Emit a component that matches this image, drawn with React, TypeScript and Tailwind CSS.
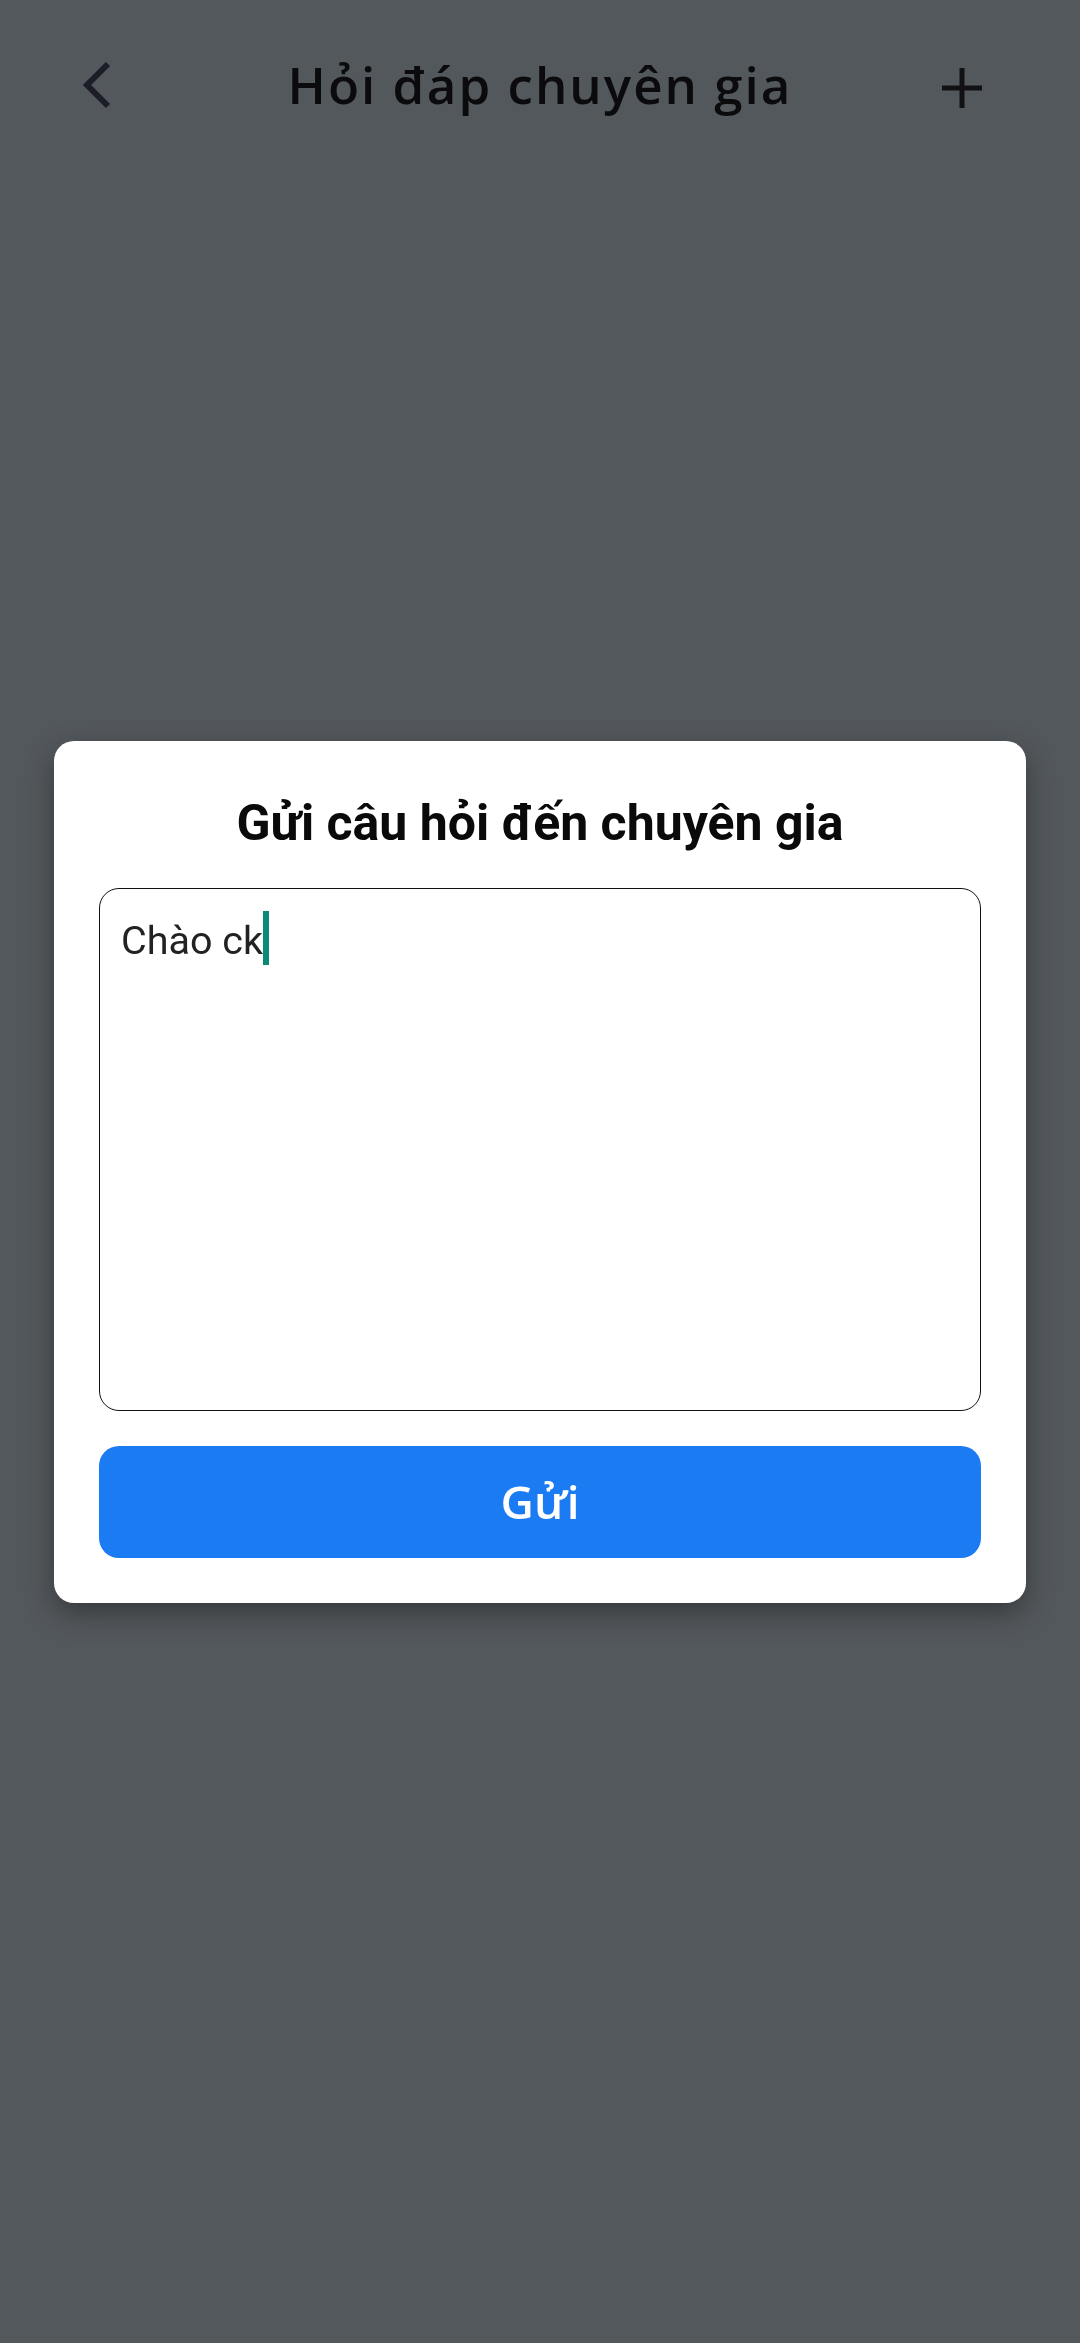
import React from "react";

export default function App() {
  return (
    <div className="relative min-h-[2343px] w-[1080px] bg-[#53585c]" style={{ fontFamily: "Roboto, 'Noto Sans', sans-serif" }}>
      {/* Header */}
      <div className="relative flex h-[170px] items-start justify-between pl-[74px] pr-[96px] pt-[58px]">
        <svg width="40" height="54" viewBox="0 0 40 54">
          <path d="M34 6 L13 27 L34 48" fill="none" stroke="#1d1d28" strokeWidth="6" strokeLinecap="butt" strokeLinejoin="miter" />
        </svg>
        <div
          className="absolute left-0 right-0 top-[59px] text-center text-[51px] font-semibold leading-none tracking-[0.04em] text-[#0b0b0d]"
          style={{ fontFamily: "'Open Sans', 'Noto Sans', sans-serif" }}
        >
          Hỏi đáp chuyên gia
        </div>
        <svg width="44" height="44" viewBox="0 0 44 44" className="mt-[8px]">
          <path d="M22 2 V42 M2 22 H42" stroke="#111114" strokeWidth="5" />
        </svg>
      </div>

      {/* Dialog */}
      <div className="fixed inset-0 flex items-center justify-center">
        <div className="flex w-[972px] flex-col rounded-[20px] bg-white px-[45px] pb-[45px] pt-[57px] shadow-[0_10px_28px_rgba(0,0,0,0.35)]">
          <div className="text-center text-[50px] font-bold leading-none text-[#0a0a0a]">
            Gửi câu hỏi đến chuyên gia
          </div>
          <div className="mt-[40px] h-[523px] rounded-[20px] border border-[#111] px-[21px] pt-[28px]">
            <div className="flex items-center text-[39.5px] leading-none text-[#222]">
              <span>Chào ck</span>
              <span className="-mt-[6px] inline-block h-[54px] w-[6px] bg-[#0b8a76]" />
            </div>
          </div>
          <button
            className="mt-[35px] flex h-[112px] w-full items-center justify-center rounded-[20px] bg-[#1b7bf2] text-[46px] font-semibold text-white"
            style={{ fontFamily: "'Open Sans', 'Noto Sans', sans-serif" }}
          >
            Gửi
          </button>
        </div>
      </div>
    </div>
  );
}
